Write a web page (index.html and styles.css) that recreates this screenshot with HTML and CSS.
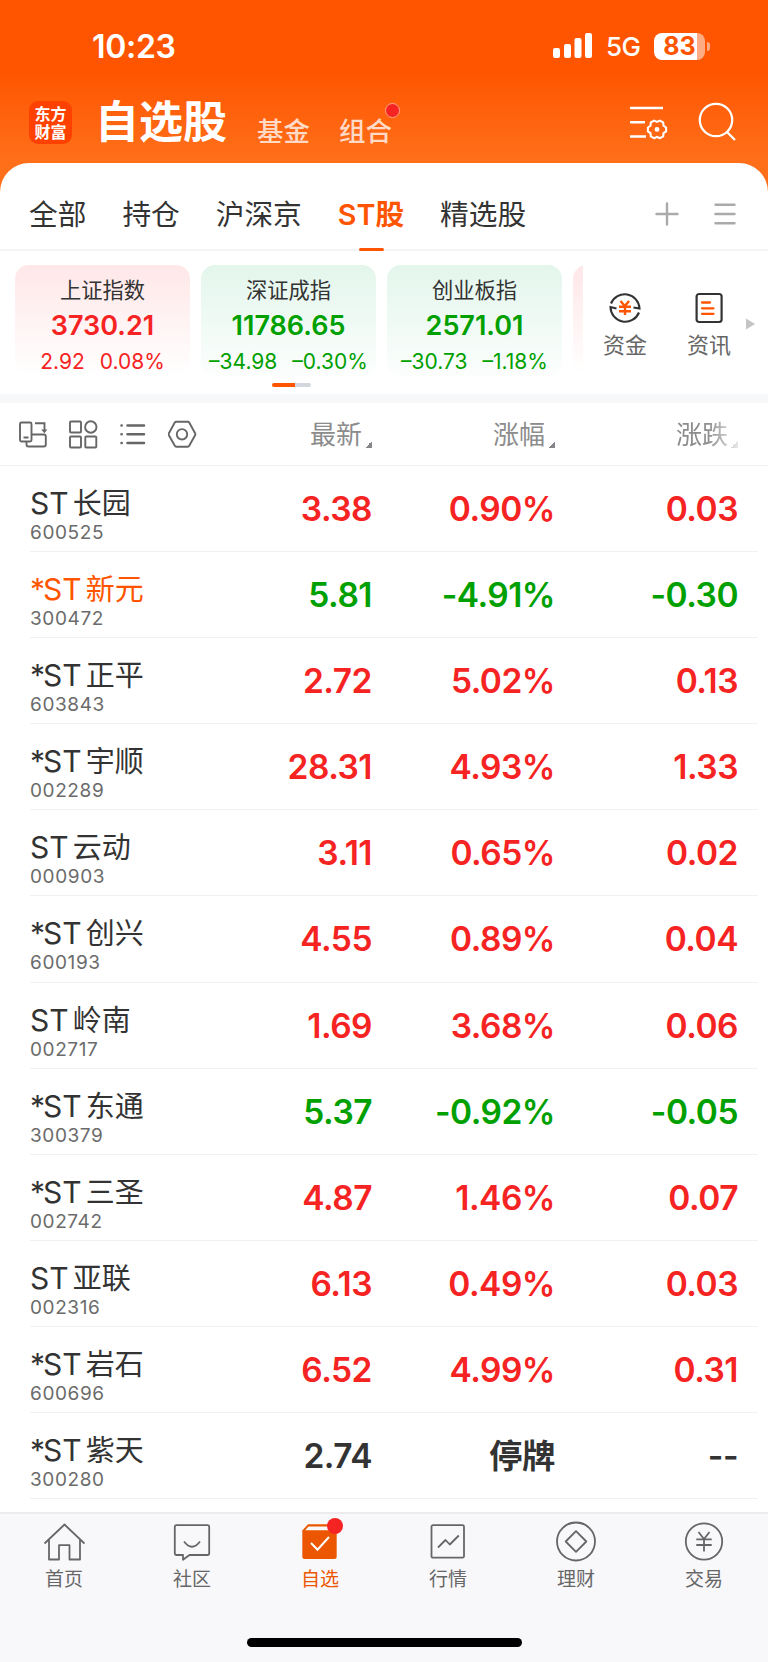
FILE: index.html
```html
<!DOCTYPE html>
<html lang="zh-CN">
<head>
  <meta charset="UTF-8" />
  <meta name="viewport" content="width=device-width, initial-scale=1.0">
  <title>自选股</title>
  <link rel="stylesheet" href="styles.css">
</head>
<body>
  <header class="top">
    <div class="status">
      <span class="time">10:23</span>
      <svg class="signal" width="40" height="26" viewBox="0 0 40 26" fill="#fff">
        <rect x="0" y="15" width="7" height="10" rx="2"/>
        <rect x="11" y="11" width="7" height="14" rx="2"/>
        <rect x="21.5" y="5" width="7" height="20" rx="2"/>
        <rect x="32" y="0" width="7" height="25" rx="2"/>
      </svg>
      <span class="network">5G</span>
      <div class="battery"><span>83</span></div>
      <i class="battery-tip"></i>
    </div>
    <div class="title-bar">
      <div class="logo">东方<br>财富</div>
      <h1>自选股</h1>
      <span class="sub-title">基金</span>
      <span class="sub-title">组合<i class="dot"></i></span>
      <svg class="icon-manage" width="40" height="38" viewBox="0 0 40 38" fill="none" stroke="#fff" stroke-width="2.4">
        <path d="M1 4h33M1 18.3h15M1 32.5h16"/>
        <path transform="translate(18 15.4)" stroke-width="2.1" stroke-linejoin="round" d="M19.1 8.1v3.8L16.5 13.75 16.2 16.9 12.9 18.8 10 17.5 7.1 18.8 3.8 16.9 3.5 13.75 .9 11.9V8.1L3.5 6.25 3.8 3.1 7.1 1.2 10 2.5 12.9 1.2 16.2 3.1 16.5 6.25z"/>
        <circle cx="28" cy="25.4" r="2.4" fill="#fff" stroke="none"/>
      </svg>
      <svg class="icon-search" width="40" height="40" viewBox="0 0 40 40" fill="none" stroke="#fff" stroke-width="2.3">
        <circle cx="18" cy="18" r="16.2"/>
        <path d="M28.5 29.5l8.5 8.5"/>
      </svg>
    </div>
  </header>

  <main class="panel">
    <nav class="tabs">
      <a>全部</a>
      <a>持仓</a>
      <a>沪深京</a>
      <a class="active">ST股</a>
      <a>精选股</a>
      <svg class="icon-add" width="24" height="24" viewBox="0 0 24 24" stroke="#aaa" stroke-width="2.4" stroke-linecap="round"><path d="M12 1.5v21M1.5 12h21"/></svg>
      <svg class="icon-menu" width="24" height="24" viewBox="0 0 24 24" stroke="#aaa" stroke-width="2.4" stroke-linecap="round"><path d="M2.5 2.7h19M2.5 12h19M2.5 21.3h19"/></svg>
    </nav>

    <section class="indices">
      <div class="cards">
        <div class="card up">
          <h3>上证指数</h3>
          <strong>3730.21</strong>
          <p><span>2.92</span><span>0.08%</span></p>
        </div>
        <div class="card down">
          <h3>深证成指</h3>
          <strong>11786.65</strong>
          <p><span>–34.98</span><span>–0.30%</span></p>
        </div>
        <div class="card down">
          <h3>创业板指</h3>
          <strong>2571.01</strong>
          <p><span>–30.73</span><span>–1.18%</span></p>
        </div>
        <div class="card up"></div>
      </div>
      <div class="shortcut">
        <svg width="34" height="34" viewBox="0 0 34 34" fill="none" stroke="#333" stroke-width="2.1">
          <path d="M3 12.5A14.8 14.8 0 0 1 31.5 17.5L25.5 16.5"/>
          <path d="M31 21.5A14.8 14.8 0 0 1 2.5 16L8.5 17.500"/>
          <path stroke="#ff5500" stroke-width="2.4" d="M12.5 10l4.300 5 4.300-5M11 15.700h12M11 20.200h12M17 15v9"/>
        </svg>
        <span>资金</span>
      </div>
      <div class="shortcut">
        <svg width="34" height="34" viewBox="0 0 34 34" fill="none" stroke="#333" stroke-width="2.2">
          <rect x="4.6" y="3" width="25" height="28" rx="2.5"/>
          <path stroke="#ff5500" stroke-width="2.3" stroke-linecap="round" d="M10 11.5h8M10 17.3h11.5M10 22.8h11.5"/>
        </svg>
        <span>资讯</span>
      </div>
      <svg class="icon-next" width="9" height="12" viewBox="0 0 9 12"><path d="M0 .5L9 6 0 11.5z" fill="#c4c4c4"/></svg>
    </section>
    <div class="pager"><i></i></div>

    <section class="quotes">
      <div class="quotes-head">
        <div class="tools">
          <svg width="30" height="30" viewBox="0 0 30 30" fill="none" stroke="#666" stroke-width="1.9">
            <rect x="2" y="3.5" width="11.5" height="19" rx="1.5"/>
            <path d="M5.5 18.5h5M17 4.3h9.5v8M8.5 22.500v3q0 2 2 2h15.300q2 0 2-2v-8q0-2-2-2H13.5"/>
            <path d="M23.2 10.5h6.2l-3 3.8z" fill="#666" stroke="none"/>
          </svg>
          <svg width="30" height="30" viewBox="0 0 30 30" fill="none" stroke="#666" stroke-width="1.9">
            <rect x="2" y="2.5" width="11" height="11" rx="1"/>
            <circle cx="22.8" cy="8" r="5.7"/>
            <rect x="2" y="17.5" width="11" height="11" rx="1"/>
            <rect x="17.3" y="17.5" width="11" height="11" rx="1"/>
          </svg>
          <svg width="30" height="30" viewBox="0 0 30 30" fill="none" stroke="#666" stroke-width="2.5" stroke-linecap="round">
            <path d="M9.5 6.5h16.5M9.5 15.2h16.5M9.5 24h16.5M3.500 6.500h.2M3.500 15.200h.2M3.500 24h.2"/>
          </svg>
          <svg width="30" height="30" viewBox="0 0 30 30" fill="none" stroke="#666" stroke-width="1.9" stroke-linejoin="round">
            <path d="M8.200 2.700h11.600q.9 0 1.400.8l5.900 10.700q.5 1 0 2L21.200 26.800q-.5.900-1.400.9H8.200q-.9 0-1.400-.9L.9 16.200q-.5-1 0-2L6.800 3.500q.5-.8 1.400-.8z"/>
            <circle cx="14" cy="15.300" r="5.2"/>
          </svg>
        </div>
        <span class="col">最新<i></i></span>
        <span class="col">涨幅<i></i></span>
        <span class="col fade">涨跌<i></i></span>
      </div>

      <div class="row up">
        <div class="stock"><b>ST<em>长园</em></b><small>600525</small></div>
        <span>3.38</span><span>0.90%</span><span>0.03</span>
      </div>
      <div class="row down">
        <div class="stock marked"><b><i>*</i>ST<em>新元</em></b><small>300472</small></div>
        <span>5.81</span><span>-4.91%</span><span>-0.30</span>
      </div>
      <div class="row up">
        <div class="stock"><b><i>*</i>ST<em>正平</em></b><small>603843</small></div>
        <span>2.72</span><span>5.02%</span><span>0.13</span>
      </div>
      <div class="row up">
        <div class="stock"><b><i>*</i>ST<em>宇顺</em></b><small>002289</small></div>
        <span>28.31</span><span>4.93%</span><span>1.33</span>
      </div>
      <div class="row up">
        <div class="stock"><b>ST<em>云动</em></b><small>000903</small></div>
        <span>3.11</span><span>0.65%</span><span>0.02</span>
      </div>
      <div class="row up">
        <div class="stock"><b><i>*</i>ST<em>创兴</em></b><small>600193</small></div>
        <span>4.55</span><span>0.89%</span><span>0.04</span>
      </div>
      <div class="row up">
        <div class="stock"><b>ST<em>岭南</em></b><small>002717</small></div>
        <span>1.69</span><span>3.68%</span><span>0.06</span>
      </div>
      <div class="row down">
        <div class="stock"><b><i>*</i>ST<em>东通</em></b><small>300379</small></div>
        <span>5.37</span><span>-0.92%</span><span>-0.05</span>
      </div>
      <div class="row up">
        <div class="stock"><b><i>*</i>ST<em>三圣</em></b><small>002742</small></div>
        <span>4.87</span><span>1.46%</span><span>0.07</span>
      </div>
      <div class="row up">
        <div class="stock"><b>ST<em>亚联</em></b><small>002316</small></div>
        <span>6.13</span><span>0.49%</span><span>0.03</span>
      </div>
      <div class="row up">
        <div class="stock"><b><i>*</i>ST<em>岩石</em></b><small>600696</small></div>
        <span>6.52</span><span>4.99%</span><span>0.31</span>
      </div>
      <div class="row">
        <div class="stock"><b><i>*</i>ST<em>紫天</em></b><small>300280</small></div>
        <span>2.74</span><span>停牌</span><span>--</span>
      </div>
    </section>
  </main>

  <footer class="tabbar">
    <nav>
      <a>
        <svg width="42" height="42" viewBox="0 0 42 42" fill="none" stroke="#666" stroke-width="1.8" stroke-linejoin="round">
          <path d="M1.5 22.5L21.5 3.5l20 19M6 19v19.5h10V24.2h10.5v14.3H37V19"/>
        </svg>
        <span>首页</span>
      </a>
      <a>
        <svg width="42" height="42" viewBox="0 0 42 42" fill="none" stroke="#666" stroke-width="1.8" stroke-linejoin="round">
          <path d="M5.5 4.2h31q1.7 0 1.7 1.7v26.4q0 1.7-1.7 1.7H18.5L12 38.8V34H5.5q-1.7 0-1.7-1.7V5.9q0-1.700 1.7-1.7z"/>
          <path d="M13 20.5q8 10.5 16 0"/>
        </svg>
        <span>社区</span>
      </a>
      <a class="active">
        <svg width="42" height="42" viewBox="0 0 42 42" fill="none">
          <path d="M9 3.2h27q1.7 0 1.7 1.7V35.5q0 2.5-2.5 2.5H5.8q-2.5 0-2.5-2.5V9.5z" fill="#ec5600"/>
          <path d="M9.5 5.5H36v3.800H6.2z" fill="#f8f8fa"/>
          <path d="M12 22l6.5 6.7L30 16" stroke="#fff" stroke-width="2"/>
        </svg>
        <i class="dot"></i>
        <span>自选</span>
      </a>
      <a>
        <svg width="42" height="42" viewBox="0 0 42 42" fill="none" stroke="#666" stroke-width="1.8" stroke-linejoin="round">
          <rect x="4.5" y="4.2" width="32.5" height="32.5" rx="1.5"/>
          <path d="M11 26.5l7.500-7.500 4.300 4.500 9-9"/>
        </svg>
        <span>行情</span>
      </a>
      <a>
        <svg width="42" height="42" viewBox="0 0 42 42" fill="none" stroke="#666" stroke-width="1.8" stroke-linejoin="round">
          <circle cx="21" cy="20.5" r="19"/>
          <path d="M21 10.2L31.3 20.5 21 30.8 10.7 20.5z"/>
        </svg>
        <span>理财</span>
      </a>
      <a>
        <svg width="42" height="42" viewBox="0 0 42 42" fill="none" stroke="#666" stroke-width="1.8">
          <circle cx="21" cy="20.5" r="18.2"/>
          <path d="M15.5 11l5.500 7 5.500-7M13.300 18.300h15.400M13.300 24h15.400M21 18v12.500"/>
        </svg>
        <span>交易</span>
      </a>
    </nav>
    <div class="home-bar"></div>
  </footer>
</body>
</html>
```

FILE: styles.css
```css
* {
  box-sizing: border-box;
}
body {
  margin: 0;
  width: 768px;
  height: 1662px;
  overflow: hidden;
  font-family: Inter, "Noto Sans CJK SC", sans-serif;
  color: #333;
  background: #ff6f1a;
}
h1, h3, p {
  margin: 0;
}
svg {
  display: block;
  flex: none;
}
i, em {
  font-style: normal;
}

/* header */
.top {
  height: 163px;
  background: linear-gradient(#ff5500 70px, #ff6f1a 160px);
  color: #fff;
}
.status {
  display: flex;
  align-items: center;
  height: 92px;
  padding-left: 92px;
}
.time {
  width: 461px;
  font-size: 32px;
  font-weight: 600;
  line-height: 40px;
  letter-spacing: -.3px;
  padding-top: 2px;
}
.network {
  width: 48px;
  margin-left: 13px;
  font-size: 26px;
  font-weight: 500;
  line-height: 30px;
  letter-spacing: -.5px;
  padding-top: 2px;
}
.battery {
  width: 51px;
  height: 27px;
  border-radius: 8px;
  background: linear-gradient(90deg, #fff 43px, #ffac85 43px);
  color: #ff5500;
  font-size: 25px;
  font-weight: 700;
  line-height: 27px;
  text-align: center;
}
.battery-tip {
  width: 3px;
  height: 9px;
  margin-left: 2px;
  border-radius: 0 4px 4px 0;
  background: #ffac85;
}
.title-bar {
  display: flex;
  height: 71px;
  padding-left: 29px;
}
.logo {
  width: 43px;
  height: 43px;
  margin-top: 9px;
  padding-top: 4px;
  border-radius: 9px;
  background: #ff4100;
  font-size: 16px;
  font-weight: 700;
  line-height: 18px;
  text-align: center;
}
h1 {
  width: 134px;
  margin-left: 23px;
  font-size: 44px;
  font-weight: 700;
  line-height: 60px;
}
.sub-title {
  position: relative;
  width: 54px;
  margin: 19px 0 0 28px;
  font-size: 26.5px;
  font-weight: 500;
  line-height: 40px;
  color: #ffdac7;
}
.dot {
  position: absolute;
  border-radius: 50%;
  background: #f62323;
}
.sub-title .dot {
  top: -8px;
  left: 46px;
  width: 15px;
  height: 15px;
  border: 1px solid #ffa48a;
}
.icon-manage {
  margin: 12px 0 0 236px;
}
.icon-search {
  margin: 10px 0 0 29px;
}

/* tabs */
.panel {
  height: 1349px;
  border-radius: 29px 29px 0 0;
  background: #fff;
}
.tabs {
  display: flex;
  height: 88px;
  padding-left: 29px;
  border-bottom: 2px solid #f4f4f5;
  font-size: 28.7px;
  line-height: 103px;
}
.tabs a {
  position: relative;
  height: 88px;
  margin-right: 36px;
  white-space: nowrap;
}
.tabs .active {
  color: #ff5500;
  font-weight: 600;
}
.tabs .active::after {
  content: "";
  position: absolute;
  left: 50%;
  bottom: 0;
  width: 25px;
  height: 3px;
  margin-left: -12px;
  border-radius: 2px;
  background: #ff5500;
}
.icon-add {
  margin: 39px 0 0 auto;
}
.icon-menu {
  margin: 39px 31px 0 34px;
}

/* index cards */
.indices {
  display: flex;
  height: 126px;
  padding: 14px 0 0 15px;
}
.cards {
  display: flex;
  gap: 11px;
  width: 568px;
  overflow: hidden;
}
.card {
  flex: none;
  width: 175px;
  height: 111px;
  padding-top: 10px;
  border-radius: 14px;
  text-align: center;
}
.card.up {
  background: linear-gradient(#ffe7e8, #fff);
}
.card.down {
  background: linear-gradient(#e3f6ec, #fcfefd);
}
.card h3 {
  font-size: 21.3px;
  font-weight: 400;
  line-height: 30px;
}
.card strong {
  display: block;
  font-size: 27px;
  font-weight: 600;
  line-height: 42px;
}
.card p {
  display: flex;
  justify-content: center;
  gap: 15px;
  font-size: 21px;
  line-height: 30px;
}
.up strong, .up p, .up > span {
  color: #f62323;
}
.down strong, .down p, .down > span {
  color: #00a000;
}
.shortcut {
  display: flex;
  flex-direction: column;
  align-items: center;
  width: 84px;
  padding-top: 26px;
  font-size: 22px;
  line-height: 40px;
  color: #666;
}
.icon-next {
  margin: 53px 0 0 -5px;
}
.pager {
  height: 26px;
  padding: 6px 0 0 272px;
  border-bottom: 9px solid #f7f8fa;
}
.pager i {
  display: block;
  width: 39px;
  height: 4px;
  border-radius: 2px;
  background: linear-gradient(90deg, #ff5500 23px, #d3d6dc 23px);
}

/* quotes */
.quotes-head {
  display: flex;
  height: 63px;
  border-bottom: 1px solid #f0f1f2;
}
.tools {
  display: flex;
  gap: 20px;
  width: 189px;
  padding: 16px 0 0 18px;
}
.col {
  display: flex;
  justify-content: flex-end;
  width: 183px;
  font-size: 26px;
  line-height: 64px;
  color: #8c8c8c;
}
.col i {
  width: 7px;
  height: 7px;
  margin: 38px 0 0 3px;
  background: linear-gradient(135deg, transparent 50%, #85858a 50%);
}
.fade {
  -webkit-mask-image: linear-gradient(90deg, #000 152px, rgba(0, 0, 0, .2) 183px);
  mask-image: linear-gradient(90deg, #000 152px, rgba(0, 0, 0, .2) 183px);
}
.row {
  display: flex;
  height: 86.1px;
  margin: 0 10px 0 30px;
  border-bottom: 1px solid #f0f1f2;
}
.row > span {
  width: 183px;
  font-size: 33.5px;
  font-weight: 600;
  line-height: 87px;
  letter-spacing: -.5px;
  text-align: right;
}
.stock {
  width: 159px;
  padding-top: 18px;
}
.stock b {
  display: block;
  font-size: 30px;
  font-weight: 400;
  line-height: 39px;
  white-space: nowrap;
}
.stock i {
  margin-right: -2px;
}
.stock em {
  margin-left: 4px;
  font-size: 29px;
}
.stock small {
  display: block;
  font-size: 19px;
  line-height: 20px;
  letter-spacing: .6px;
  color: #6b6b6b;
}
.marked b {
  color: #ff5500;
}

/* bottom bar */
.tabbar {
  height: 150px;
  border-top: 2px solid #ececee;
  background: #f8f8fa;
}
.tabbar nav {
  display: flex;
  height: 124px;
}
.tabbar a {
  position: relative;
  display: flex;
  flex-direction: column;
  align-items: center;
  width: 128px;
  padding-top: 7px;
  font-size: 19px;
  line-height: 34px;
  color: #666;
}
.tabbar .active {
  color: #ec5600;
}
.tabbar .dot {
  top: 4px;
  left: 71px;
  width: 16px;
  height: 16px;
}
.home-bar {
  width: 275px;
  height: 9px;
  margin: 0 auto;
  border-radius: 5px;
  background: #000;
}
```
